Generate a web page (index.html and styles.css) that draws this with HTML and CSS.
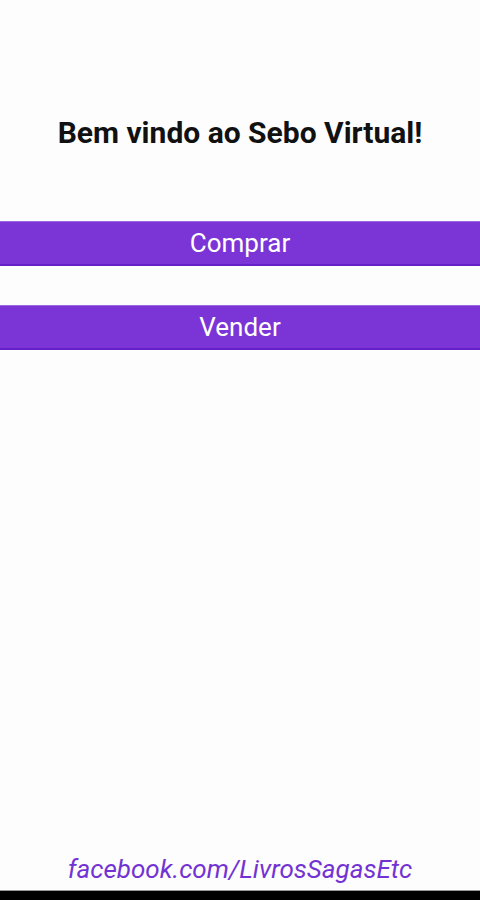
FILE: index.html
```html
<!DOCTYPE html>
<html lang="pt">
<head>
<meta charset="utf-8">
<title>Sebo Virtual</title>
<link rel="stylesheet" href="styles.css">
</head>
<body>
<div class="screen">
  <h1 class="title">Bem vindo ao Sebo Virtual!</h1>
  <div class="actions">
    <button class="btn">Comprar</button>
    <button class="btn">Vender</button>
  </div>
  <div class="spacer"></div>
  <a class="footer-link" href="#">facebook.com/LivrosSagasEtc</a>
  <div class="navbar"></div>
</div>
</body>
</html>
```
FILE: styles.css
```css
html, body {
  margin: 0;
  padding: 0;
  background: #fdfdfd;
}
.screen {
  width: 480px;
  height: 900px;
  display: flex;
  flex-direction: column;
  font-family: Roboto, "Liberation Sans", sans-serif;
}
.title {
  margin: 115px 0 0;
  font-size: 30px;
  line-height: 35px;
  font-weight: 700;
  color: #111;
  text-align: center;
}
.actions {
  margin-top: 71px;
  display: flex;
  flex-direction: column;
  gap: 39px;
}
.btn {
  height: 45px;
  border: 0;
  border-top: 1px solid #9d6be0;
  border-bottom: 2px solid #6620c8;
  background: #7b35d6;
  color: #fff;
  font-family: Roboto, "Liberation Sans", sans-serif;
  font-size: 26px;
  padding: 0;
  width: 100%;
}
.spacer {
  flex: 1;
}
.footer-link {
  text-align: center;
  font-style: italic;
  font-size: 26px;
  line-height: 30px;
  color: #7333d3;
  text-decoration: none;
  margin-bottom: 6px;
}
.navbar {
  height: 9px;
  background: #000;
  border-top: 1px solid #999;
}
```
